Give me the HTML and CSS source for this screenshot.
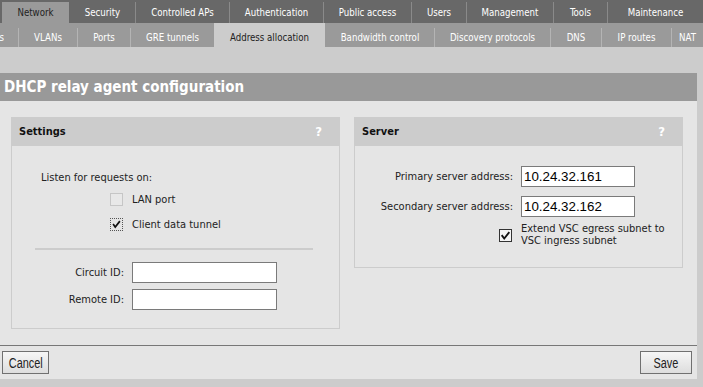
FILE: index.html
```html
<!DOCTYPE html>
<html lang="en">
<head>
    <meta charset="UTF-8">
    <title>DHCP relay agent configuration</title>
    <link rel="stylesheet" href="styles.css">
</head>
<body>

<div class="topnav">
    <span class="tab active">Network</span>
    <span class="tab">Security</span>
    <span class="tab">Controlled APs</span>
    <span class="tab">Authentication</span>
    <span class="tab">Public access</span>
    <span class="tab">Users</span>
    <span class="tab">Management</span>
    <span class="tab">Tools</span>
    <span class="tab">Maintenance</span>
</div>

<div class="subnav">
    <span class="tab cut">Interfaces</span>
    <span class="tab">VLANs</span>
    <span class="tab">Ports</span>
    <span class="tab">GRE tunnels</span>
    <span class="tab active">Address allocation</span>
    <span class="tab">Bandwidth control</span>
    <span class="tab">Discovery protocols</span>
    <span class="tab">DNS</span>
    <span class="tab">IP routes</span>
    <span class="tab">NAT</span>
</div>

<div class="band"></div>

<div class="page">
    <div class="title">DHCP relay agent configuration</div>

    <div class="content">
        <div class="panels">
            <div class="panel settings">
                <div class="panel-head"><span>Settings</span><span class="help">?</span></div>
                <div class="panel-body">
                    <div class="listen">Listen for requests on:</div>
                    <div class="check-row">
                        <span class="box-col"><span class="box disabled"></span></span>
                        <span>LAN port</span>
                    </div>
                    <div class="check-row gap-12">
                        <span class="box-col">
                            <span class="box focus">
                                <svg viewBox="0 0 13 13" width="13" height="13"><path d="M2.5 6 L5 9.5 L10.5 2.5" fill="none" stroke="#111" stroke-width="2"/></svg>
                            </span>
                        </span>
                        <span>Client data tunnel</span>
                    </div>
                    <div class="sep"></div>
                    <div class="row first">
                        <label for="circuit">Circuit ID:</label>
                        <input type="text" id="circuit">
                    </div>
                    <div class="row">
                        <label for="remote">Remote ID:</label>
                        <input type="text" id="remote">
                    </div>
                </div>
            </div>

            <div class="panel server">
                <div class="panel-head"><span>Server</span><span class="help">?</span></div>
                <div class="panel-body">
                    <div class="row">
                        <label for="primary">Primary server address:</label>
                        <input type="text" id="primary" value="10.24.32.161">
                    </div>
                    <div class="row second">
                        <label for="secondary">Secondary server address:</label>
                        <input type="text" id="secondary" value="10.24.32.162">
                    </div>
                    <div class="check-row wrap">
                        <span class="box-col">
                            <span class="box on">
                                <svg viewBox="0 0 13 13" width="11" height="11"><path d="M2 6 L5 10 L11 2.5" fill="none" stroke="#111" stroke-width="2.2"/></svg>
                            </span>
                        </span>
                        <span>Extend VSC egress subnet to<br>VSC ingress subnet</span>
                    </div>
                </div>
            </div>
        </div>

        <div class="footer">
            <button class="btn btn-cancel"><span class="btn-text">Cancel</span></button>
            <button class="btn btn-save"><span class="btn-text">Save</span></button>
        </div>
    </div>
</div>

</body>
</html>
```

FILE: styles.css
```css
body {
    margin: 0;
    background-color: #cccccc;
    font-family: "DejaVu Sans Condensed", "DejaVu Sans", sans-serif;
    font-stretch: condensed;
    font-size: 11px;
    color: #222;
}

/* top tab bar */
.topnav {
    display: grid;
    grid-template-columns: 67px 66px 94px 94px 88px 55px 87px 54px 1fr;
    height: 23px;
    box-sizing: border-box;
    padding: 2px 0 0 2px;
    background-color: #686868;
}
.topnav .tab {
    height: 21px;
    line-height: 21px;
    text-align: center;
    white-space: nowrap;
    font-size: 9.6px;
    color: #fff;
    border-left: 1px solid #8a8a8a;
}
.topnav .tab:first-child,
.topnav .active + .tab {
    border-left-color: transparent;
}
.topnav .active {
    background-color: #9a9a9a;
    color: #222;
    border-left: none;
}

/* second tab bar */
.subnav {
    display: grid;
    grid-template-columns: 18px 59px 53px 84px 111px 109px 116px 51px 70px 1fr;
    align-items: end;
    height: 24px;
    overflow: hidden;
    background-color: #9a9a9a;
}
.subnav .tab {
    height: 19px;
    line-height: 19px;
    text-align: center;
    white-space: nowrap;
    font-size: 9.6px;
    color: #fff;
    border-left: 1px solid #b4b4b4;
}
.subnav .cut {
    display: flex;
    justify-content: flex-end;
    padding-right: 14px;
    overflow: hidden;
    border-left: none;
}
.subnav .active {
    height: 24px;
    box-sizing: border-box;
    padding-top: 5px;
    background-color: #cccccc;
    color: #222;
    border-left: none;
}
.subnav .active + .tab {
    border-left-color: transparent;
}

.band {
    height: 26px;
}

.page {
    width: 697px;
}
.title {
    height: 28px;
    line-height: 28px;
    padding-left: 4px;
    background-color: #999999;
    color: #fff;
    font-weight: bold;
    font-size: 15px;
}
.content {
    background-color: #e5e5e5;
}

/* panels */
.panels {
    display: flex;
    align-items: flex-start;
    gap: 14px;
    padding: 16px 0 0 11px;
}
.panel {
    width: 329px;
    box-sizing: border-box;
    border: 1px solid #cccccc;
}
.settings {
    --label-w: 112px;
}
.server {
    --label-w: 158px;
}
.panel-head {
    display: flex;
    justify-content: space-between;
    height: 28px;
    line-height: 28px;
    padding: 0 17px 0 7px;
    background-color: #cccccc;
    font-weight: bold;
    color: #111;
}
.help {
    color: #fff;
    font-size: 13px;
}
.settings .panel-body {
    padding: 25px 0 18px 0;
}
.server .panel-body {
    padding: 20px 0 20px 0;
}

.listen {
    margin-left: 29px;
    line-height: 13px;
}
.check-row {
    display: flex;
    align-items: center;
    gap: 8px;
    margin-top: 9px;
    line-height: 13px;
}
.check-row.gap-12 {
    margin-top: 12px;
}
.check-row.wrap {
    margin-top: 6px;
    line-height: 12px;
}
.box-col {
    display: flex;
    justify-content: flex-end;
    width: var(--label-w);
    flex: none;
}
.box {
    display: flex;
    align-items: center;
    justify-content: center;
    width: 13px;
    height: 13px;
    box-sizing: border-box;
    margin-right: 1px;
}
.box.disabled {
    border: 1px solid #c6c6c6;
    background-color: #e8e8e8;
}
.box.focus {
    border: 1px dotted #555;
}
.box.on {
    border: 1px solid #333;
    background-color: #f4f4f4;
}

.sep {
    height: 2px;
    margin: 17px 26px 0 23px;
    background-color: #cccccc;
}

.row {
    display: flex;
    align-items: center;
    gap: 8px;
    margin-top: 6px;
}
.row:first-child {
    margin-top: 0;
}
.row.first {
    margin-top: 12px;
}
.row.second {
    margin-top: 9px;
}
.row label {
    width: var(--label-w);
    flex: none;
    text-align: right;
}
.row input {
    width: 145px;
    height: 21px;
    box-sizing: border-box;
    margin: 0;
    padding: 0 2px;
    border: 1px solid #7a7a7a;
    background-color: #fff;
    font-family: "Liberation Sans", Arial, sans-serif;
    font-size: 13.33px;
    color: #000;
}
.server .row input {
    width: 114px;
}

/* footer buttons */
.footer {
    display: flex;
    justify-content: space-between;
    margin-top: 16px;
    padding: 5px 5px 5px 2px;
    border-top: 1px solid #777;
}
.btn {
    display: flex;
    align-items: center;
    justify-content: center;
    height: 23px;
    padding: 0;
    overflow: hidden;
    border: 1px solid #707070;
    border-radius: 0;
    background: linear-gradient(#f6f6f6, #dddddd);
    font-family: "Liberation Sans", Arial, sans-serif;
    font-size: 14px;
    color: #222;
}
.btn-text {
    display: inline-block;
    transform: scaleX(0.78);
}
.btn-cancel {
    width: 47px;
}
.btn-save {
    width: 52px;
}
```
